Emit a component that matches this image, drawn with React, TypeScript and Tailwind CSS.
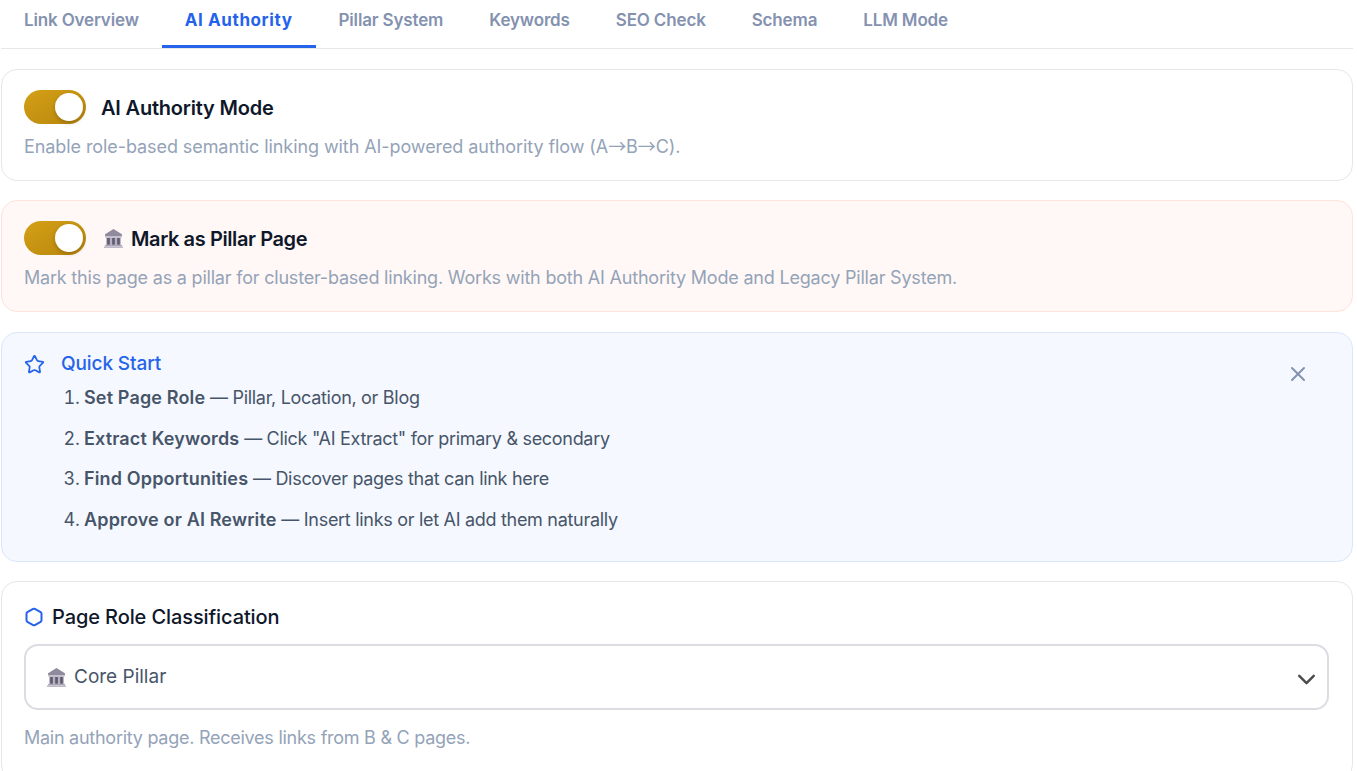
import { ChevronDown, Hexagon, Star, X } from 'lucide-react';

const tabs = ['Link Overview', 'AI Authority', 'Pillar System', 'Keywords', 'SEO Check', 'Schema', 'LLM Mode'];

const steps = [
  { title: 'Set Page Role', rest: ' — Pillar, Location, or Blog' },
  { title: 'Extract Keywords', rest: ' — Click "AI Extract" for primary & secondary' },
  { title: 'Find Opportunities', rest: ' — Discover pages that can link here' },
  { title: 'Approve or AI Rewrite', rest: ' — Insert links or let AI add them naturally' },
];

function Toggle() {
  return (
    <div className="flex h-[34px] w-[62px] shrink-0 items-center justify-end rounded-full bg-gradient-to-br from-[#d4a017] to-[#b8860b] pr-[3px]">
      <div className="h-[28px] w-[28px] rounded-full bg-white shadow-[0_2px_4px_rgba(0,0,0,0.2)]" />
    </div>
  );
}

function PillarIcon() {
  return (
    <svg viewBox="1 1 18 18" className="h-[19px] w-[19px] shrink-0">
      <path d="M10 1 L18 6 V8 H2 V6 Z" fill="#8f8a9e" />
      <rect x="2.5" y="8" width="15" height="1.5" fill="#c4c0ce" />
      <rect x="3" y="9.5" width="14" height="6.5" fill="#b5b0c0" />
      <rect x="4" y="9.5" width="2.5" height="6.5" fill="#5f5a70" />
      <rect x="8.75" y="9.5" width="2.5" height="6.5" fill="#5f5a70" />
      <rect x="13.5" y="9.5" width="2.5" height="6.5" fill="#5f5a70" />
      <rect x="2" y="16" width="16" height="1.5" fill="#a9a4b5" />
      <rect x="1" y="17.5" width="18" height="1.5" fill="#bdb9c6" />
    </svg>
  );
}

export default function App() {
  return (
    <div className="h-[771px] w-[1357px] overflow-hidden bg-white font-['Inter',sans-serif]">
      <div className="ml-[1px] flex w-[1352px] flex-col gap-[20px]">
        <div className="flex h-[49px] border-b border-[#e5e7eb]">
          {tabs.map((tab) => (
            <div
              key={tab}
              className={`flex h-[48px] items-center border-b-[3px] px-[23px] pb-[4px] text-[17px] ${
                tab === 'AI Authority'
                  ? 'border-[#2563eb] font-bold tracking-[0.6px] text-[#2563eb]'
                  : 'border-transparent font-semibold tracking-[-0.15px] text-[#8492b0]'
              }`}
            >
              {tab}
            </div>
          ))}
        </div>

        <div className="-mb-[0.6px] h-[112px] rounded-[16px] border border-[#e5e7eb] bg-white px-[22px] pt-[20px]">
          <div className="flex items-center gap-[15px]">
            <Toggle />
            <span className="pt-[2px] text-[20px] font-semibold tracking-[-0.2px] text-[#0f172a]">AI Authority Mode</span>
          </div>
          <p className="mt-[11px] text-[18px] leading-[24px] tracking-[-0.08px] text-[#94a3b8]">
            Enable role-based semantic linking with AI-powered authority flow (A
            <span className="font-['Noto_Sans_CJK_SC'] leading-[0]">→</span>B
            <span className="font-['Noto_Sans_CJK_SC'] leading-[0]">→</span>C).
          </p>
        </div>

        <div className="h-[111.4px] rounded-[16px] border border-[#fde3dc] bg-[#fff8f6] px-[22px] pt-[20px]">
          <div className="flex items-center">
            <Toggle />
            <span className="ml-[18px] mr-[8px]">
              <PillarIcon />
            </span>
            <span className="pt-[2px] text-[20px] font-semibold tracking-[-0.4px] text-[#0f172a]">Mark as Pillar Page</span>
          </div>
          <p className="mt-[11px] text-[18px] leading-[24px] tracking-[-0.2px] text-[#94a3b8]">
            Mark this page as a pillar for cluster-based linking. Works with both AI Authority Mode and Legacy Pillar System.
          </p>
        </div>

        <div className="relative -mb-[0.6px] h-[230px] rounded-[16px] border border-[#dbe6fb] bg-[#f5f8ff] px-[22px] pt-[17px]">
          <div className="flex items-center gap-[16px]">
            <Star className="h-[21px] w-[21px] text-[#2563eb]" strokeWidth={2} />
            <span className="text-[19px] font-medium tracking-[-0.1px] text-[#2563eb]">Quick Start</span>
          </div>
          <ol className="mt-[6px] flex list-decimal flex-col gap-[12.6px] pl-[60px]">
            {steps.map((step) => (
              <li key={step.title} className="text-[18px] leading-[28px] tracking-[-0.3px] text-[#475569]">
                <strong className="font-semibold tracking-[0.15px]">{step.title}</strong>
                {step.rest}
              </li>
            ))}
          </ol>
          <X className="absolute right-[42px] top-[29px] h-[24px] w-[24px] text-[#8492b0]" strokeWidth={2} />
        </div>

        <div className="h-[200px] rounded-[16px] border border-[#e5e7eb] bg-white pl-[22px] pr-[23px] pt-[20px]">
          <div className="flex items-center gap-[8px]">
            <Hexagon className="h-[20px] w-[20px] text-[#2563eb]" strokeWidth={2.4} />
            <span className="text-[20px] font-medium tracking-[-0.1px] text-[#0f172a]">Page Role Classification</span>
          </div>
          <div className="mt-[12px] flex h-[66px] items-center justify-between rounded-[14px] border-2 border-[#dcdde3] pl-[21px] pr-[6px]">
            <div className="flex items-center gap-[8px]">
              <PillarIcon />
              <span className="text-[19px] text-[#475569]">Core Pillar</span>
            </div>
            <ChevronDown className="mt-[4px] h-[29px] w-[29px] text-[#4b4b4b]" strokeWidth={2} />
          </div>
          <p className="mt-[16px] text-[18px] leading-[24px] tracking-[-0.26px] text-[#94a3b8]">Main authority page. Receives links from B &amp; C pages.</p>
        </div>
      </div>
    </div>
  );
}
